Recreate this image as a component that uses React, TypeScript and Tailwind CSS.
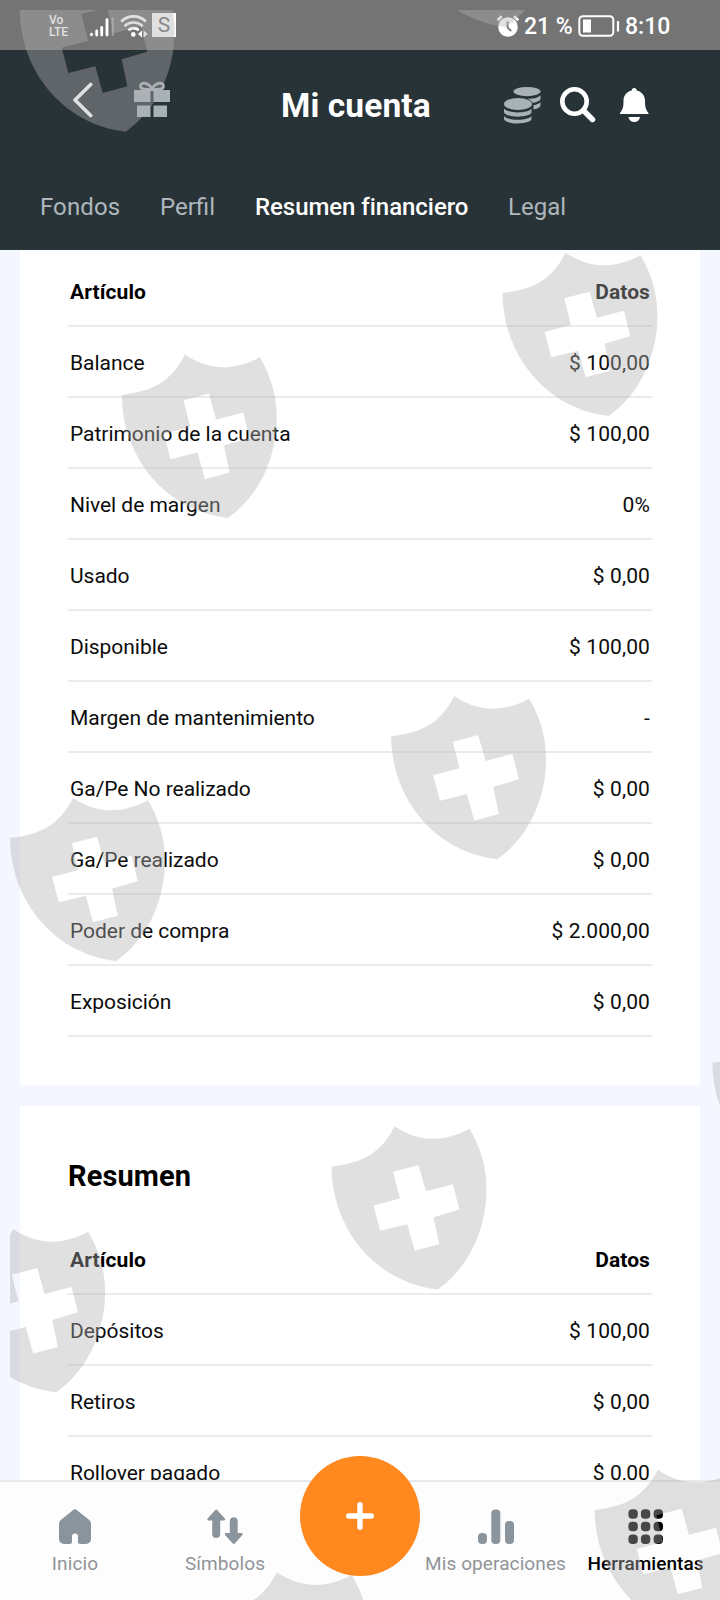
import { ReactNode } from 'react'
import clsx from 'clsx'

interface Item {
  label: string
  value: string
}

const accountItems: Item[] = [
  { label: 'Balance', value: '$ 100,00' },
  { label: 'Patrimonio de la cuenta', value: '$ 100,00' },
  { label: 'Nivel de margen', value: '0%' },
  { label: 'Usado', value: '$ 0,00' },
  { label: 'Disponible', value: '$ 100,00' },
  { label: 'Margen de mantenimiento', value: '-' },
  { label: 'Ga/Pe No realizado', value: '$ 0,00' },
  { label: 'Ga/Pe realizado', value: '$ 0,00' },
  { label: 'Poder de compra', value: '$ 2.000,00' },
  { label: 'Exposición', value: '$ 0,00' },
]

const summaryItems: Item[] = [
  { label: 'Depósitos', value: '$ 100,00' },
  { label: 'Retiros', value: '$ 0,00' },
  { label: 'Rollover pagado', value: '$ 0,00' },
]

// left corner of every shield
const shields = [
  [19.7, 8.7],
  [400, -96],
  [121.9, 394.9],
  [502.6, 293],
  [391.2, 736.3],
  [10.1, 838],
  [712.5, 1062.8],
  [-49.8, 1269.3],
  [331.6, 1166.5],
  [594.7, 1510],
  [213.8, 1612.6],
]

function StatusBar() {
  return (
    <div className="h-[50px] bg-[#747474] text-white flex items-center justify-between pl-[49px] pr-[50px]">
      <div className="flex items-center">
        <div className="w-[21px] pt-[3px] text-[12px] leading-[11.5px] font-medium">
          <div>Vo</div>
          <div>LTE</div>
        </div>
        <svg className="ml-5 mt-1 w-[24px] h-[20px]" viewBox="0 0 24 20" fill="none" stroke="#fff" strokeWidth="2.8" strokeLinecap="round">
          <path d="M1.5 17.2v.6M6.7 14v4M11.7 10.5v7.5M17 2.6V18" />
          <path d="M22.7 1V18" stroke="#a5a5a5" strokeWidth="2" />
        </svg>
        <svg className="ml-[6px] mt-px w-[28px] h-[24px]" viewBox="0 0 28 24" fill="none" stroke="#fff" strokeWidth="2.7">
          <path d="M1.2 7.6a17.5 17.5 0 0 1 24.8 0" />
          <path d="M4.6 12.2a12.8 12.8 0 0 1 18 0" />
          <path d="M8.4 16.2a7.6 7.6 0 0 1 10.4 0" />
          <circle cx="13.3" cy="20.4" r="2.3" fill="#fff" stroke="none" />
          <path d="M22 16.6v7l-4-3.5zM23.6 16.6v7l4-3.5z" fill="#fff" stroke="none" />
        </svg>
        <div className="ml-[4px] w-6 h-6 bg-white text-[#6c6c6c] text-[21px] leading-6 text-center">S</div>
      </div>
      <div className="flex items-center pt-0.5">
        <svg className="w-[24px] h-[24px]" viewBox="0 0 24 24" fill="none">
          <circle cx="12" cy="13" r="9.8" fill="#fff" />
          <path d="M1.5 6.2l4.3-4M18 2.2l4.3 4" stroke="#fff" strokeWidth="2.6" />
          <path d="M11.6 7.5v6l3.6 3.6" stroke="#808080" strokeWidth="2" />
        </svg>
        <span className="ml-[4px] pt-[3px] w-[50px] text-[23px] font-medium whitespace-nowrap">21 %</span>
        <svg className="ml-[4px] w-[42px] h-[22px]" viewBox="0 0 42 22" fill="none">
          <rect x="1.3" y="1.3" width="34" height="19.4" rx="3.5" stroke="#fff" strokeWidth="2" />
          <rect x="5" y="4.5" width="8" height="13" fill="#fff" />
          <path d="M40 6v10.500" stroke="#fff" strokeWidth="2.2" />
        </svg>
        <span className="ml-[5px] pt-[3px] w-[45px] text-[23px] font-medium">8:10</span>
      </div>
    </div>
  )
}

function Header() {
  return (
    <header className="h-[200px] bg-[#283338]">
      <div className="flex items-center h-[110px]">
        <svg className="ml-[72px] -mt-2.5 w-[22px] h-[36px]" viewBox="0 0 22 36" fill="none" stroke="#fff" strokeWidth="3.6" strokeLinecap="round" strokeLinejoin="round">
          <path d="M18.700 2.500 3 18 18.700 33.500" />
        </svg>
        <svg className="ml-[40px] -mt-3 w-[36px] h-[37px]" viewBox="0 0 36 37" fill="#a9b1b8">
          <path d="M0 9h16.500v12H0zM19.500 9H36v12H19.500zM3 24.500h13.500V36H3zM19.500 24.500H33V36H19.500z" />
          <path d="M18 8.500C13.500 8.500 6.500 9 6.500 5.200 6.500 1 13 .6 18 7.500 23 .6 29.500 1 29.500 5.200 29.500 9 22.500 8.500 18 8.500z" fill="none" stroke="#a9b1b8" strokeWidth="2.800" />
        </svg>
        <h1 className="ml-[111px] pt-[3px] w-[150px] text-[33.5px] font-bold text-white whitespace-nowrap tracking-[0.1px]">Mi cuenta</h1>
        <svg className="ml-[73px] w-[37px] h-[37px]" viewBox="0 0 37 37" fill="#a9b1b8">
          <ellipse cx="23" cy="4.600" rx="13.500" ry="4.600" />
          <path d="M36.500 8v4.500c-1.500 2-4.500 3-8 3.300-.8-1.600-2.700-3-5-4 6 .2 11-1 13-3.800z" />
          <path d="M36.500 15v4c-1.300 1.600-3.600 3-7 3.400v-4.200c3-.4 5.700-1.500 7-3.200z" />
          <ellipse cx="14" cy="17" rx="14" ry="6" />
          <path d="M0 21.500c3.500 5.200 24 5.200 27.500 0v4c-2 5.500-25.500 5.500-27.500 0z" />
          <path d="M0 29c3.500 5 24 5 27.500 0v3.300c-2 5.500-25.500 5.500-27.500 0z" />
        </svg>
        <svg className="ml-[19px] w-[36px] h-[36px]" viewBox="0 0 36 36" fill="none" stroke="#fff">
          <circle cx="14.500" cy="14.500" r="12.200" strokeWidth="4.600" />
          <path d="M23.500 23.500l9 9" strokeWidth="5.400" strokeLinecap="round" />
        </svg>
        <svg className="ml-[24px] w-[29px] h-[35px]" viewBox="0 0 29 35" fill="#fff">
          <path d="M14.200 0c1.500 0 2.500 1 2.500 2.500 5 1.200 8.300 5 8.300 10.200 0 6 .5 8.500 3.500 12.300V26H0v-1c3-3.800 3.500-6.300 3.500-12.300C3.500 7.500 6.800 3.700 11.700 2.500 11.700 1 12.700 0 14.200 0z" />
          <path d="M8.500 29h11.500c-.5 3.300-2.800 5-5.700 5s-5.300-1.700-5.800-5z" />
        </svg>
      </div>
      <nav className="flex items-center h-[90px] pt-1 text-2xl text-[#afb7bd] whitespace-nowrap">
        <a className="ml-10 w-[80px] tracking-[0.1px]">Fondos</a>
        <a className="ml-10 w-[55px]">Perfil</a>
        <a className="ml-10 w-[213px] font-medium text-white tracking-[-0.05px]">Resumen financiero</a>
        <a className="ml-10">Legal</a>
      </nav>
    </header>
  )
}

function Table({ items }: { items: Item[] }) {
  return (
    <div className="text-[21px] text-[#0c0c0c]">
      <div className="flex justify-between items-center h-[71px] px-0.5 pt-[5px] border-b-2 border-[#ebebeb] font-bold text-black tracking-[0.1px]">
        <span>Artículo</span>
        <span>Datos</span>
      </div>
      {items.map((item) => (
        <div key={item.label} className="flex justify-between items-center h-[71px] px-0.5 pt-[5px] border-b-2 border-[#ebebeb]">
          <span className="tracking-[-0.04px]">{item.label}</span>
          <span className="tracking-[0.1px]">{item.value}</span>
        </div>
      ))}
    </div>
  )
}

function NavItem({ label, active, className, children }: { label: string; active?: boolean; className: string; children: ReactNode }) {
  return (
    <a className={clsx('flex flex-col items-center shrink-0 pt-[27px] whitespace-nowrap', className)}>
      <svg className="w-[36px] h-[36px]" viewBox="0 0 36 36" fill={active ? '#000' : '#8a949c'}>
        {children}
      </svg>
      <span className={clsx('mt-[7px] text-[19px] leading-6', active ? 'font-medium tracking-[0.05px] text-black' : 'tracking-[0.1px] text-[#909498]')}>{label}</span>
    </a>
  )
}

function BottomNav() {
  return (
    <div className="relative h-[120px] shrink-0 flex bg-[#fdfdfe] border-t-2 border-[#e6e9ed]">
      <NavItem label="Inicio" className="w-[150px]">
        <path d="M16 1.200a3 3 0 0 1 4 0l12 9.500a5 5 0 0 1 2 4V30a5 5 0 0 1-5 5h-6a2 2 0 0 1-2-2v-5.500a3 3 0 0 0-6 0V33a2 2 0 0 1-2 2H7a5 5 0 0 1-5-5V14.700a5 5 0 0 1 2-4z" />
      </NavItem>
      <NavItem label="Símbolos" className="w-[150px]">
        <path d="M7.800 1.500c1-1.200 1.800-1.200 2.800 0l7 7.700c1 1.200.5 2.300-1 2.300H13.200V25a4 4 0 0 1-8 0V11.500H1.900c-1.500 0-2-1.100-1-2.300z" />
        <path d="M25.300 34c1 1.200 1.900 1.200 2.900 0l7-7.700c1-1.200.5-2.300-1-2.300H30.700V11.500a4 4 0 0 0-7.900 0V24H19.300c-1.500 0-2 1.100-1 2.300z" />
      </NavItem>
      <div className="w-[120px] shrink-0" />
      <NavItem label="Mis operaciones" className="w-[151px]">
        <rect x="0" y="24" width="9" height="11" rx="4" />
        <rect x="13.300" y="0.500" width="9" height="34.500" rx="4" />
        <rect x="27" y="12" width="9" height="23" rx="4" />
      </NavItem>
      <NavItem label="Herramientas" active className="w-[149px]">
        {[5, 17.5, 30.2].map((y) => [5, 17.5, 30.2].map((x) => (
          <rect key={`${x}-${y}`} x={x - 4.6} y={y - 4.8} width="9.400" height="9.600" rx="4" />
        )))}
      </NavItem>
      <button className="absolute left-[300px] -top-[26px] w-[120px] h-[120px] rounded-full bg-[#ff881f] flex items-center justify-center">
        <svg className="w-[28px] h-[28px]" viewBox="0 0 28 28" stroke="#fff" strokeWidth="5.4" strokeLinecap="round">
          <path d="M14 2.700v22.600M2.700 14h22.600" />
        </svg>
      </button>
    </div>
  )
}

function ShieldOverlay() {
  return (
    <div className="absolute left-2.5 top-2.5 right-0 bottom-0 overflow-hidden pointer-events-none">
      <svg className="w-[710px] h-[1590px]" viewBox="10 10 710 1590" fill="#b2b2b2" fillOpacity="0.4" fillRule="evenodd">
        {shields.map(([x, y]) => (
          <path
            key={`${x}-${y}`}
            transform={`translate(${x} ${y}) scale(.3333) translate(-93 -168)`}
            d="M93 168C185 157 240 130 282 47C350 92 420 100 507 55C550 130 560 190 557 260C550 370 500 475 411 537C220 515 93 350 93 168zM278 184L354 164L376 242L457 221L476 297L399 320L416 401L342 421L320 341L239 361L219 285L298 264z"
          />
        ))}
      </svg>
    </div>
  )
}

export default function App() {
  return (
    <div className="relative w-[720px] h-[1600px] overflow-hidden flex flex-col bg-[#f4f7ff] font-[Roboto,sans-serif]">
      <StatusBar />
      <Header />

      <main className="flex-1 min-h-0 overflow-hidden px-5">
        <section className="h-[835px] bg-white px-12 pt-[6px]">
          <Table items={accountItems} />
        </section>
        <section className="mt-[21px] bg-white px-12 pt-[47px]">
          <h2 className="h-[71px] text-[29px] leading-[46px] font-bold text-black tracking-[0.1px]">Resumen</h2>
          <Table items={summaryItems} />
        </section>
      </main>

      <BottomNav />
      <ShieldOverlay />
    </div>
  )
}
